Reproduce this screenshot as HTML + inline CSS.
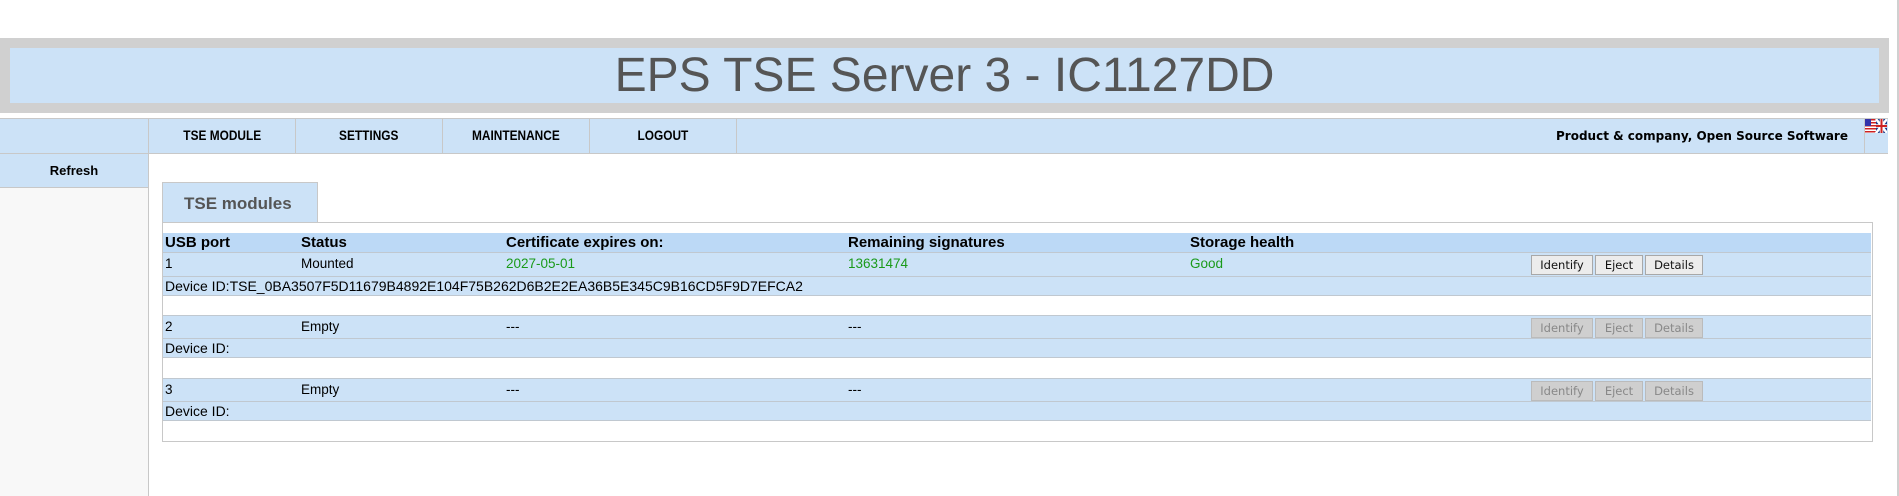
<!DOCTYPE html>
<html><head><style>
*{margin:0;padding:0;box-sizing:border-box}
body{width:1899px;height:496px;background:#fff;font-family:"Liberation Sans",Arial,sans-serif;position:relative;overflow:hidden}
.abs{position:absolute}
#rb{left:1897px;top:0;width:2px;height:496px;background:#d0d0d0}
#gray{left:0;top:38px;width:1889px;height:75px;background:#d0d0d0}
#title{left:10px;top:48px;width:1869px;height:55px;background:#cce2f7;text-align:center;font-size:48px;line-height:55px;color:#555}
#nav{left:0;top:118px;width:1888px;height:36px;background:#cce2f7;border-top:1px solid #c8c8c8;border-bottom:1px solid #c8c8c8}
.ni{top:0;height:34px;border-right:1px solid #c8c8c8;font-size:13.5px;font-weight:bold;line-height:34px;text-align:center}
.ni i{font-style:normal;display:inline-block;transform:scaleX(0.88)}
#side{left:0;top:154px;width:149px;height:342px;border-right:1px solid #c8c8c8;background:#f8f8f8}
#ref{left:0;top:154px;width:148px;height:34px;background:#cce2f7;border-bottom:1px solid #c8c8c8;font-size:13px;font-weight:bold;line-height:34px;text-align:center}
#tab{left:162px;top:182px;width:156px;height:41px;background:#cce2f7;border:1px solid #c8c8c8;border-bottom:none;font-size:17px;font-weight:bold;color:#555;line-height:41px;padding-left:21px}
#box{left:162px;top:222px;width:1711px;height:220px;border:1px solid #c8c8c8}
.row{left:163px;width:1708px;background:#cce2f7;border-bottom:1px solid #c0c8d0;font-size:13.5px;line-height:22px}
.row span{position:absolute;top:0}
.hd{background:#bcd9f6;font-weight:bold;font-size:15px}
.g{color:#1a9a1a}
.dev{font-size:14px}
.b{position:absolute;top:2px;height:20px;border:1px solid #a8a8a8;background:#ececec;font-family:"DejaVu Sans",Tahoma,sans-serif;font-size:11.5px;line-height:18px;text-align:center;color:#111}
.d{background:#cfcfcf;color:#888;border-color:#bbb}
</style></head><body>
<div class="abs" id="rb"></div>
<div class="abs" id="gray"></div>
<div class="abs" id="title">EPS TSE Server 3 - IC1127DD</div>
<div class="abs" id="nav">
<div class="abs ni" style="left:0;width:149px"></div>
<div class="abs ni" style="left:149px;width:147px"><i>TSE MODULE</i></div>
<div class="abs ni" style="left:296px;width:147px"><i>SETTINGS</i></div>
<div class="abs ni" style="left:443px;width:147px"><i>MAINTENANCE</i></div>
<div class="abs ni" style="left:590px;width:147px"><i>LOGOUT</i></div>
<div class="abs" style="right:40px;top:0;line-height:34px;font-family:'DejaVu Sans',Verdana,sans-serif;font-weight:bold;font-size:12px">Product &amp; company, Open Source Software</div>
<div class="abs" style="left:1864px;top:0;width:1px;height:34px;background:#c8c8c8"></div>
<svg class="abs" style="left:1865px;top:0" width="22" height="14" viewBox="0 0 22 14"><rect width="11" height="14" fill="#fff"/><g fill="#c22"><rect y="0" width="11" height="1.5"/><rect y="3" width="11" height="1.5"/><rect y="6" width="11" height="1.5"/><rect y="9" width="11" height="1.5"/><rect y="12" width="11" height="1.5"/></g><rect width="6" height="7" fill="#33a"/><rect x="11" width="11" height="14" fill="#1a3a8a"/><path d="M11 0L22 14M22 0L11 14" stroke="#fff" stroke-width="2.5"/><path d="M16.5 0V14M11 7H22" stroke="#fff" stroke-width="3.5"/><path d="M16.5 0V14M11 7H22" stroke="#c22" stroke-width="2"/></svg>
</div>
<div class="abs" id="side"></div>
<div class="abs" id="ref">Refresh</div>
<div class="abs" id="tab">TSE modules</div>
<div class="abs" id="box"></div>
<div class="abs row hd" style="top:233px;height:20px;line-height:20px"><span style="left:2px">USB port</span><span style="left:138px">Status</span><span style="left:343px">Certificate expires on:</span><span style="left:685px">Remaining signatures</span><span style="left:1027px">Storage health</span></div>
<div class="abs row" style="top:253px;height:24px"><span style="left:2px">1</span><span style="left:138px">Mounted</span><span class="g" style="left:343px">2027-05-01</span><span class="g" style="left:685px">13631474</span><span class="g" style="left:1027px">Good</span>
<div class="b" style="left:1368px;width:62px">Identify</div><div class="b" style="left:1432px;width:48px">Eject</div><div class="b" style="left:1482px;width:58px">Details</div></div>
<div class="abs row dev" style="top:277px;height:19px;line-height:19px"><span style="left:2px">Device ID:TSE_0BA3507F5D11679B4892E104F75B262D6B2E2EA36B5E345C9B16CD5F9D7EFCA2</span></div>
<div class="abs row" style="top:315px;height:24px;border-top:1px solid #c0c8d0"><span style="left:2px">2</span><span style="left:138px">Empty</span><span style="left:343px">---</span><span style="left:685px">---</span>
<div class="b d" style="left:1368px;width:62px">Identify</div><div class="b d" style="left:1432px;width:48px">Eject</div><div class="b d" style="left:1482px;width:58px">Details</div></div>
<div class="abs row dev" style="top:339px;height:19px;line-height:19px"><span style="left:2px">Device ID:</span></div>
<div class="abs row" style="top:378px;height:24px;border-top:1px solid #c0c8d0"><span style="left:2px">3</span><span style="left:138px">Empty</span><span style="left:343px">---</span><span style="left:685px">---</span>
<div class="b d" style="left:1368px;width:62px">Identify</div><div class="b d" style="left:1432px;width:48px">Eject</div><div class="b d" style="left:1482px;width:58px">Details</div></div>
<div class="abs row dev" style="top:402px;height:19px;line-height:19px"><span style="left:2px">Device ID:</span></div>
</body></html>
